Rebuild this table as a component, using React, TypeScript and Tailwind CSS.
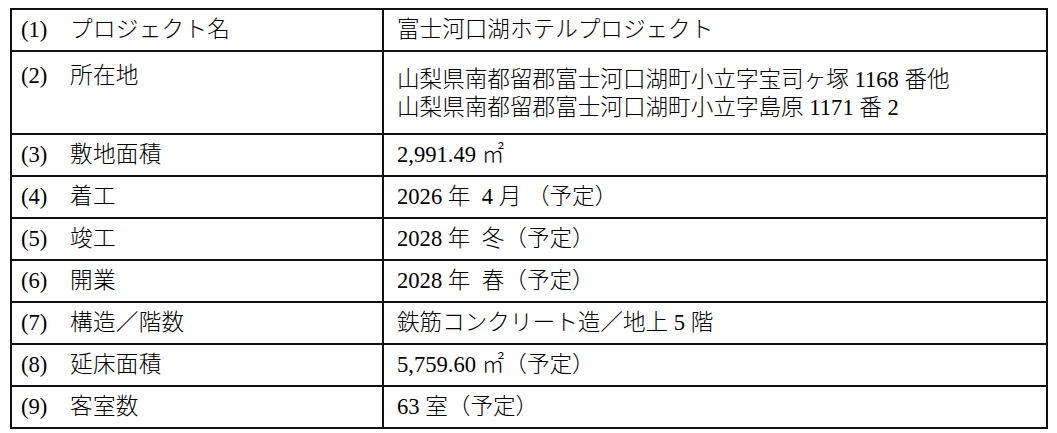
const rows: { no: string; label: string; value: string[] }[] = [
  { no: "(1)", label: "プロジェクト名", value: ["富士河口湖ホテルプロジェクト"] },
  {
    no: "(2)",
    label: "所在地",
    value: [
      "山梨県南都留郡富士河口湖町小立字宝司ヶ塚 1168 番他",
      "山梨県南都留郡富士河口湖町小立字島原 1171 番 2",
    ],
  },
  { no: "(3)", label: "敷地面積", value: ["2,991.49 ㎡"] },
  { no: "(4)", label: "着工", value: ["2026 年  4 月 （予定）"] },
  { no: "(5)", label: "竣工", value: ["2028 年  冬（予定）"] },
  { no: "(6)", label: "開業", value: ["2028 年  春（予定）"] },
  { no: "(7)", label: "構造／階数", value: ["鉄筋コンクリート造／地上 5 階"] },
  { no: "(8)", label: "延床面積", value: ["5,759.60 ㎡（予定）"] },
  { no: "(9)", label: "客室数", value: ["63 室（予定）"] },
];

export default function App() {
  return (
    <div
      className="w-[1057px] h-[433px] bg-white pl-[10px] pt-[8px] text-black"
      style={{ fontFamily: '"Liberation Serif", "Noto Sans CJK JP", serif' }}
    >
      <table className="w-[1038px] border-collapse border-2 border-[#111] text-[22.6px] leading-[28px] whitespace-pre">
        <tbody>
          {rows.map((row) => {
            const multi = row.value.length > 1;
            return (
              <tr key={row.no} className={multi ? "h-[83px]" : "h-[42px]"}>
                <td
                  className={`w-[372px] border-2 border-[#111] pl-[9px] ${
                    multi ? "align-top pt-[10px]" : "align-middle"
                  }`}
                >
                  <div className="flex">
                    <span className="w-[49px] shrink-0">{row.no}</span>
                    <span className="font-light tracking-[0.3px]">{row.label}</span>
                  </div>
                </td>
                <td
                  className={`border-2 border-[#111] pl-[13px] ${
                    multi ? "align-top pt-[14px]" : "align-middle"
                  }`}
                >
                  {row.value.map((line) => (
                    <div key={line} className="font-light">
                      {line}
                    </div>
                  ))}
                </td>
              </tr>
            );
          })}
        </tbody>
      </table>
    </div>
  );
}
